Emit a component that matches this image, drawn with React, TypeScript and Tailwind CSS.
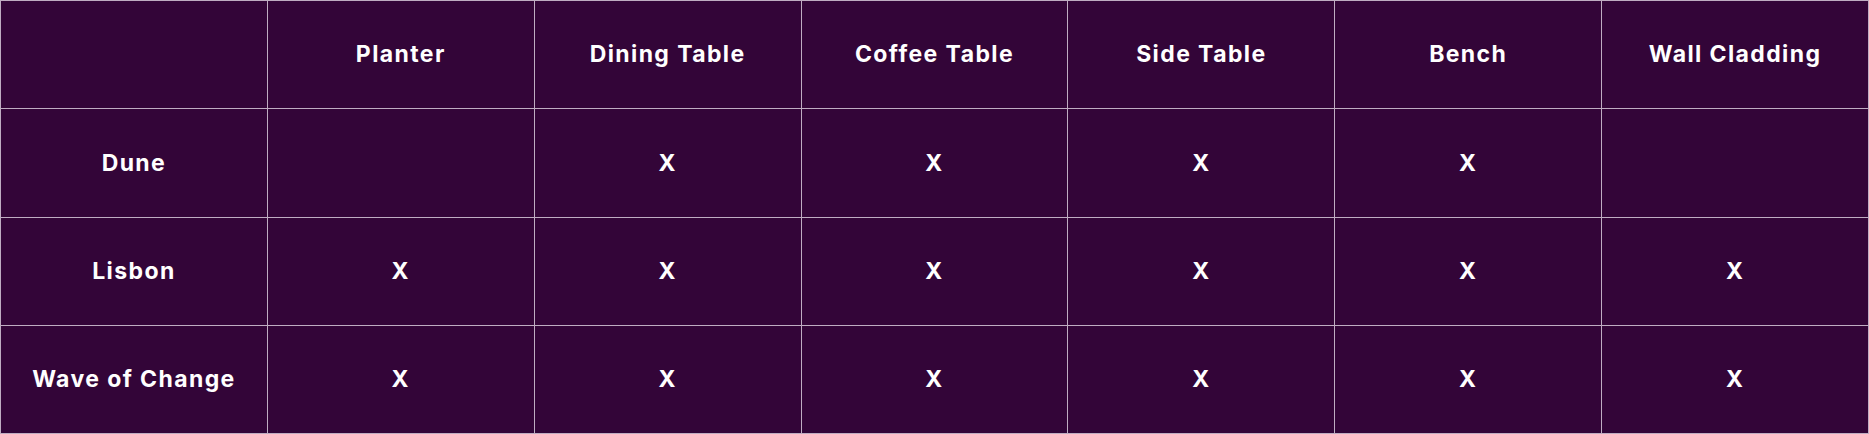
import React from "react";

const cols = ["Planter", "Dining Table", "Coffee Table", "Side Table", "Bench", "Wall Cladding"];
const rows: { name: string; marks: boolean[] }[] = [
  { name: "Dune", marks: [false, true, true, true, true, false] },
  { name: "Lisbon", marks: [true, true, true, true, true, true] },
  { name: "Wave of Change", marks: [true, true, true, true, true, true] },
];

function Cell({ children }: { children?: React.ReactNode }) {
  return (
    <div className="flex items-center justify-center border-r border-b border-[#bfadc2] text-[23px] font-bold tracking-[1.4px] text-white">
      {children}
    </div>
  );
}

export default function App() {
  return (
    <div
      className="grid h-[434px] w-full grid-cols-7 grid-rows-4 border-l border-t border-[#bfadc2] bg-[#330538]"
      style={{ fontFamily: "Inter, 'Open Sans', sans-serif" }}
    >
      <Cell />
      {cols.map((c) => (
        <Cell key={c}>{c}</Cell>
      ))}
      {rows.map((r) => (
        <React.Fragment key={r.name}>
          <Cell>{r.name}</Cell>
          {r.marks.map((m, i) => (
            <Cell key={i}>{m ? "X" : null}</Cell>
          ))}
        </React.Fragment>
      ))}
    </div>
  );
}
